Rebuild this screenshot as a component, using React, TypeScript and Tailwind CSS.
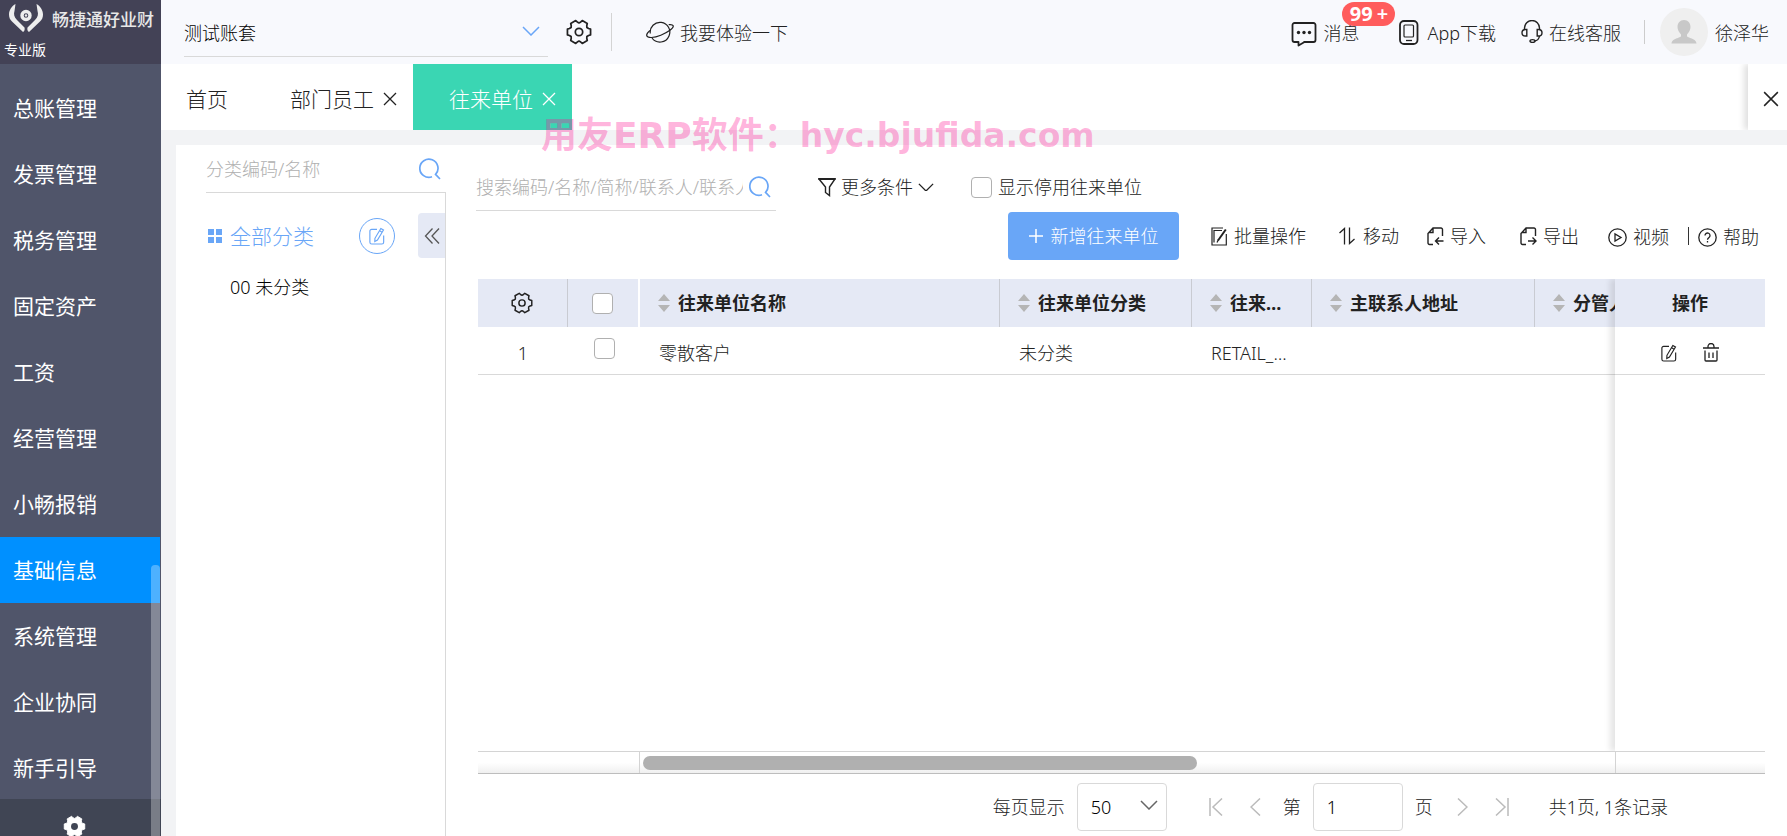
import React, { useState } from "react";

interface IconProps {
  className?: string;
}

const menuItems = [
  "总账管理",
  "发票管理",
  "税务管理",
  "固定资产",
  "工资",
  "经营管理",
  "小畅报销",
  "基础信息",
  "系统管理",
  "企业协同",
  "新手引导",
];

const columns = [
  { title: "往来单位名称", value: "零散客户" },
  { title: "往来单位分类", value: "未分类" },
  { title: "往来单位性质", value: "RETAIL_CUSTOMER" },
  { title: "主联系人地址", value: "" },
  { title: "分管人员", value: "" },
];

// six-toothed cog outline
const cogPath = (() => {
  const pt = (deg: number, r: number) => {
    const a = (deg * Math.PI) / 180;
    return `${(12 + r * Math.cos(a)).toFixed(2)} ${(12 + r * Math.sin(a)).toFixed(2)}`;
  };
  const pts: string[] = [];
  for (let k = 0; k < 6; k++) {
    const a = k * 60;
    pts.push(pt(a - 20, 9.4), pt(a - 14, 11), pt(a + 14, 11), pt(a + 20, 9.4), pt(a + 30, 8.4));
  }
  return `M${pts.join("L")}Z`;
})();

const CogIcon = ({ className }: IconProps) => (
  <svg className={className} viewBox="0 0 24 24" fill="none" stroke="currentColor" strokeWidth="1.6" strokeLinejoin="round">
    <path d={cogPath} />
    <circle cx="12" cy="12" r="3.4" />
  </svg>
);

const CogSolidIcon = ({ className }: IconProps) => (
  <svg className={className} viewBox="0 0 24 24" fill="currentColor" stroke="currentColor" strokeWidth="1" strokeLinejoin="round">
    <path d={cogPath} />
    <circle cx="12" cy="12" r="3.6" fill="#404554" stroke="none" />
  </svg>
);

const SearchIcon = ({ className }: IconProps) => (
  <svg className={className} viewBox="0 0 22 22" fill="none" stroke="currentColor" strokeWidth="1.7">
    <path d="M13 18.8A9.1 9.1 0 1 1 16.6 16.4L21 21" />
  </svg>
);

const ChevronIcon = ({ className }: IconProps) => (
  <svg className={className} viewBox="0 0 18 10" fill="none" stroke="currentColor" strokeWidth="1.5">
    <path d="M1 1l8 8 8-8" />
  </svg>
);

const CloseIcon = ({ className }: IconProps) => (
  <svg className={className} viewBox="0 0 14 14" fill="none" stroke="currentColor" strokeWidth="1.3">
    <path d="M1 1l12 12M13 1L1 13" />
  </svg>
);

const LogoIcon = () => (
  <svg className="w-9 h-[30px] shrink-0" viewBox="0 0 36 30" fill="#eeeeee">
    <path d="M7.500 1C4 3 1 7 1 11.500c0 3 1 5 3 7L15 29c1.500-1 2-2.500 1.500-4.500L9 17c-3-3-3.500-6-2.500-9z" />
    <path d="M28.500 1C32 3 35 7 35 11.500c0 3-1 5-3 7L21 29c-1.500-1-2-2.500-1.500-4.500L27 17c3-3 3.500-6 2.500-9z" />
    <circle cx="18" cy="12.500" r="4" fill="none" stroke="#eeeeee" strokeWidth="3.400" />
    <circle cx="18" cy="12.500" r="1.200" />
  </svg>
);

const PlanetIcon = () => (
  <svg className="w-7 h-[22px]" viewBox="0 0 28 22" fill="none" stroke="currentColor" strokeWidth="1.200">
    <path d="M4.300 12.500A9.800 9.800 0 1 1 23 15a9.800 9.800 0 0 1-17 2" />
    <path d="M4 9.500C1.500 11.500.3 13.500.8 14.800c1 2.500 7 2.200 14-.6S28 7 27.200 4.800c-.4-1-2-1.400-4.500-1.100" />
  </svg>
);

const MessageIcon = () => (
  <svg className="w-[26px] h-[25px]" viewBox="0 0 26 25" fill="none" stroke="currentColor" strokeWidth="1.800">
    <path d="M12.500 20H22.500a2 2 0 0 0 2-2V3a2 2 0 0 0-2-2H3.500a2 2 0 0 0-2 2v15a2 2 0 0 0 2 2H7.500v3.500L13.500 20" strokeLinejoin="round" />
    <g fill="currentColor" stroke="none">
      <circle cx="7.500" cy="10.500" r="1.700" />
      <circle cx="13" cy="10.500" r="1.700" />
      <circle cx="18.500" cy="10.500" r="1.700" />
    </g>
  </svg>
);

const PhoneIcon = () => (
  <svg className="w-5 h-[25px]" viewBox="0 0 20 25" fill="none" stroke="currentColor">
    <rect x="1" y="1" width="17.500" height="23" rx="4" strokeWidth="1.800" />
    <rect x="5" y="5" width="9.500" height="12" rx="1" strokeWidth="1.200" />
    <path d="M7 20.500h6" strokeWidth="1.300" />
  </svg>
);

const HeadsetIcon = () => (
  <svg className="w-[22px] h-6" viewBox="0 0 22 24" fill="none" stroke="currentColor" strokeWidth="1.400">
    <path d="M3.500 9.500V8a7.500 7.500 0 0 1 15 0v1.500" />
    <path d="M5.800 9.500v6.500H4.500C2.500 16 1 14.700 1 12.700s1.500-3.200 3.500-3.200zM16.200 9.500v6.500h1.300c2 0 3.500-1.300 3.500-3.300s-1.500-3.200-3.500-3.200z" />
    <path d="M18.500 16c-.5 3-2.500 4.800-5 5" />
    <ellipse cx="11.500" cy="21" rx="2.500" ry="1.400" />
  </svg>
);

const EditIcon = ({ className }: IconProps) => (
  <svg className={className} viewBox="0 0 18 20" fill="none" stroke="currentColor" strokeWidth="1.300">
    <path d="M9 2.500H3a2 2 0 0 0-2 2V17a2 2 0 0 0 2 2h11.500a2 2 0 0 0 2-2V9.500" />
    <path d="M13.300 1.500l3 1.800-6.800 11.200-3 1.700.2-3.600zM12 4l2.800 1.700" />
  </svg>
);

const TrashIcon = () => (
  <svg className="w-4 h-[19px]" viewBox="0 0 16 19" fill="none" stroke="currentColor" strokeWidth="1.300">
    <path d="M0 5h16M5 5V3.500a3 3 0 0 1 6 0V5M2 7.500V17a1 1 0 0 0 1 1h10a1 1 0 0 0 1-1V7.500M6 9.500v5.500M10 9.500v5.500" />
  </svg>
);

const FilterIcon = () => (
  <svg className="w-[18px] h-5" viewBox="0 0 18 20" fill="none" stroke="currentColor" strokeWidth="1.400">
    <path d="M1 2h16l-5.500 8V18.500l-4-3V10z" />
    <path d="M.5 2h17" strokeWidth="2" />
  </svg>
);

const BatchIcon = () => (
  <svg className="w-4 h-[19px]" viewBox="0 0 16 19" fill="none" stroke="currentColor" strokeWidth="1.200">
    <path d="M3 15.500V3.500H11M12 1H1v17h14.300V7" />
    <path d="M14.800 2.500L7 13.500" strokeWidth="2" />
    <path d="M7.500 12.500L6 15.500" />
  </svg>
);

const MoveIcon = () => (
  <svg className="w-[18px] h-[18px]" viewBox="0 0 18 18" fill="none" stroke="currentColor" strokeWidth="1.300">
    <path d="M6.500 17.500V1.500L1.500 6M11.500 .5v16L16.500 12" />
  </svg>
);

const FileIcon = ({ out }: { out?: boolean }) => (
  <svg className="w-[17px] h-[19px]" viewBox="0 0 17 19" fill="none" stroke="currentColor" strokeWidth="1.400">
    <path d="M6 17.500H2.500A1.500 1.500 0 0 1 1 16V6.500L6 1h8a1.500 1.500 0 0 1 1.500 1.500V9M6 1v4.500H1.500" />
    {out ? (
      <path d="M8 14h8M12.500 10.500L16 14l-3.500 3.500" />
    ) : (
      <path d="M16.500 14h-8M12 10.500L8.500 14l3.500 3.500" />
    )}
  </svg>
);

const PlayIcon = () => (
  <svg className="w-[19px] h-[19px]" viewBox="0 0 19 19" fill="none" stroke="currentColor" strokeWidth="1.300">
    <circle cx="9.500" cy="9.500" r="8.700" />
    <path d="M7 6v7l6-3.500z" />
  </svg>
);

const HelpIcon = () => (
  <svg className="w-[19px] h-[19px]" viewBox="0 0 19 19" fill="none" stroke="currentColor" strokeWidth="1.300">
    <circle cx="9.500" cy="9.500" r="8.700" />
    <path d="M7 7.500a2.500 2.500 0 1 1 4 2c-1 .8-1.500 1.200-1.500 2.200M9.500 13v1.500" />
  </svg>
);

const SortIcon = () => (
  <svg className="w-3 h-5 shrink-0" viewBox="0 0 12 20" fill="#b5b5b5">
    <path d="M6 1l6 7H0zM6 19l6-7H0z" />
  </svg>
);

const Checkbox = ({ label, id }: { label: string; id?: string }) => (
  <input
    type="checkbox"
    id={id}
    aria-label={label}
    className="block size-[21px] shrink-0 appearance-none rounded border border-[#b0b0b0] bg-white checked:bg-[#69a6f7]"
  />
);

function Sidebar() {
  const [active, setActive] = useState("基础信息");

  return (
    <aside className="relative flex w-[161px] shrink-0 flex-col bg-[#50556a] font-normal text-white">
      <div className="h-16 shrink-0 bg-[#434256]">
        <div className="flex items-center gap-2 pt-[3px] pl-2">
          <LogoIcon />
          <span className="pt-1 text-[17px] leading-6 font-medium whitespace-nowrap text-[#e8e8e8]">
            畅捷通好业财
          </span>
        </div>
        <div className="pt-[5px] pl-1 text-sm leading-6">专业版</div>
      </div>
      <nav className="min-h-0 flex-1 overflow-hidden pt-[11px]">
        {menuItems.map((item) => (
          <button
            key={item}
            onClick={() => setActive(item)}
            className={`block h-[66px] w-40 pl-[13px] text-left text-[21px] ${
              item === active ? "bg-[#0090ff]" : ""
            }`}
          >
            {item}
          </button>
        ))}
      </nav>
      <button aria-label="设置" className="flex h-[37px] shrink-0 justify-center bg-[#404554] pt-4 pr-3">
        <CogSolidIcon className="size-[23px]" />
      </button>
      <div className="absolute right-px bottom-0 h-[271px] w-[9px] rounded-t bg-white/30" />
    </aside>
  );
}

function TopBar() {
  return (
    <header className="flex h-16 shrink-0 items-center bg-[#f8f9fd] pr-[18px] pl-[23px] whitespace-nowrap">
      <div className="mb-[7px] grid h-12 w-[364px] items-center self-end border-b border-[#d9d9d9]">
        <select aria-label="账套" className="col-start-1 row-start-1 h-10 appearance-none bg-transparent text-black">
          <option>测试账套</option>
        </select>
        <ChevronIcon className="pointer-events-none col-start-1 row-start-1 mr-2 mb-1 w-[18px] justify-self-end text-[#69a6f7]" />
      </div>
      <button aria-label="设置" className="ml-[18px]">
        <CogIcon className="size-[26px]" />
      </button>
      <div className="ml-[19px] h-[38px] w-px bg-[#d4d4d4]" />
      <button className="ml-[34px] flex items-center gap-[6px]">
        <PlanetIcon />
        <span className="pt-[2px]">我要体验一下</span>
      </button>
      <div className="ml-auto flex items-center">
        <button className="relative flex items-center gap-[6px]">
          <span className="pt-1">
            <MessageIcon />
          </span>
          <span className="pt-[2px]">消息</span>
          <span className="absolute -top-4 left-[51px] flex h-6 w-[53px] items-center justify-center rounded-full bg-[#ff5c5c] text-xl font-bold text-white">
            99
            <span className="pl-1 font-semibold">+</span>
          </span>
        </button>
        <button className="ml-10 flex items-center gap-2">
          <PhoneIcon />
          <span className="pt-[2px]">App下载</span>
        </button>
        <button className="ml-[25px] flex items-center gap-[6px]">
          <HeadsetIcon />
          <span className="pt-[2px]">在线客服</span>
        </button>
        <div className="ml-[23px] h-6 w-px bg-[#cccccc]" />
        <button className="ml-[15px] flex items-center gap-[7px]">
          <svg className="size-12" viewBox="0 0 48 48">
            <circle cx="24" cy="24" r="24" fill="#efefef" />
            <path
              d="M24 12c4 0 6.500 3 6.500 7 0 3-1.500 5-3.500 7.500v2c4 2 9.500 3 9.500 7H11.500c0-4 5.500-5 9.500-7v-2c-2-2.500-3.500-4.500-3.500-7.500 0-4 2.500-7 6.500-7z"
              fill="#c8c8c8"
            />
          </svg>
          <span className="pt-[2px]">徐泽华</span>
        </button>
      </div>
    </header>
  );
}

function TabBar() {
  return (
    <div className="flex h-[66px] shrink-0 overflow-hidden bg-white pt-0 text-[21px] whitespace-nowrap">
      <button className="w-[110px] pt-1 pr-[18px]">首页</button>
      <div className="flex w-[142px] items-center justify-end gap-[9px] pt-1 pr-4">
        <button>部门员工</button>
        <button aria-label="关闭部门员工">
          <CloseIcon className="size-[14px]" />
        </button>
      </div>
      <div className="flex w-[159px] items-center justify-end gap-[9px] bg-[#3ad6b3] pt-1 pr-4 text-white">
        <button>往来单位</button>
        <button aria-label="关闭往来单位">
          <CloseIcon className="size-[14px]" />
        </button>
      </div>
      <button
        aria-label="关闭全部"
        className="ml-auto flex w-[39px] items-center justify-center pt-1 pl-[6px] shadow-[-4px_0_6px_rgba(0,0,0,0.12)]"
      >
        <CloseIcon className="size-4" />
      </button>
    </div>
  );
}

function CategoryPanel() {
  return (
    <section className="flex w-[270px] shrink-0 flex-col pl-[30px]">
      <div className="flex h-12 shrink-0 items-center border-b border-[#d9d9d9] pr-[5px]">
        <input
          aria-label="分类编码/名称"
          placeholder="分类编码/名称"
          className="min-w-0 flex-1 outline-none placeholder:text-[#b0b0b0]"
        />
        <button aria-label="搜索分类" className="text-[#69a6f7]">
          <SearchIcon className="size-[22px]" />
        </button>
      </div>
      <div className="flex-1 border-r border-[#d9d9d9] pt-5">
        <div className="flex h-[45px] items-center text-[21px] text-[#69a6f7]">
          <svg className="mx-[2px] size-[14px]" viewBox="0 0 14 14" fill="currentColor">
            <path d="M0 0h6v6H0zM8 0h6v6H8zM0 8h6v6H0zM8 8h6v6H8z" />
          </svg>
          <button className="ml-[6px]">全部分类</button>
          <button
            aria-label="编辑分类"
            className="ml-auto flex size-9 items-center justify-center rounded-full border border-[#69a6f7]"
          >
            <EditIcon className="h-[18px] w-4" />
          </button>
          <button
            aria-label="收起"
            className="ml-[23px] flex h-[45px] w-[27px] items-center justify-center rounded-l bg-[#e5e9f5] text-[#555555]"
          >
            <svg className="size-4" viewBox="0 0 16 16" fill="none" stroke="currentColor" strokeWidth="1.300">
              <path d="M8.500 .5L1.500 8l7 7.500M15 .5L8 8l7 7.500" />
            </svg>
          </button>
        </div>
        <button className="mt-[17px] ml-6 block text-black">00 未分类</button>
      </div>
    </section>
  );
}

function Toolbar() {
  return (
    <>
      <div className="flex h-[66px] items-end">
        <div className="flex h-12 w-[300px] items-center border-b border-[#d9d9d9] pr-[5px]">
          <input
            aria-label="搜索往来单位"
            placeholder="搜索编码/名称/简称/联系人/联系人手机"
            className="min-w-0 flex-1 outline-none placeholder:text-[#b0b0b0]"
          />
          <button aria-label="搜索" className="ml-[6px] text-[#69a6f7]">
            <SearchIcon className="size-[22px]" />
          </button>
        </div>
        <button className="ml-[42px] flex h-12 items-center gap-[5px]">
          <FilterIcon />
          更多条件
          <ChevronIcon className="w-4" />
        </button>
        <div className="ml-[37px] flex h-12 items-center gap-[6px]">
          <Checkbox id="show-disabled" label="显示停用往来单位" />
          <label htmlFor="show-disabled">显示停用往来单位</label>
        </div>
      </div>
      <div className="flex items-center justify-end pt-px pr-[6px]">
        <button className="flex h-12 w-[171px] items-center justify-center gap-2 rounded bg-[#69a6f7] text-white">
          <svg className="size-[14px]" viewBox="0 0 14 14" stroke="currentColor" strokeWidth="1.500">
            <path d="M7 0v14M0 7h14" />
          </svg>
          新增往来单位
        </button>
        <button className="ml-8 flex items-center gap-[7px]">
          <BatchIcon />
          批量操作
        </button>
        <button className="ml-8 flex items-center gap-[7px]">
          <MoveIcon />
          移动
        </button>
        <button className="ml-7 flex items-center gap-[6px]">
          <FileIcon />
          导入
        </button>
        <button className="ml-[34px] flex items-center gap-[6px]">
          <FileIcon out />
          导出
        </button>
        <button className="ml-[29px] flex items-center gap-[6px] pt-[2px]">
          <PlayIcon />
          视频
        </button>
        <div className="ml-[19px] h-[18px] w-px bg-[#333333]" />
        <button className="ml-[9px] flex items-center gap-[6px] pt-[2px]">
          <HelpIcon />
          帮助
        </button>
      </div>
    </>
  );
}

function PartnerTable() {
  return (
    <div className="mt-[19px] ml-[2px] flex min-h-0 flex-1 flex-col">
      <div className="flex min-h-0 flex-1 border-b border-[#d4d4d4]">
        <div className="min-w-0 flex-1 overflow-hidden">
          <table className="w-[1260px] table-fixed border-separate border-spacing-0">
            <colgroup>
              <col className="w-[90px]" />
              <col className="w-[72px]" />
              <col className="w-[360px]" />
              <col className="w-[192px]" />
              <col className="w-[120px]" />
              <col className="w-[223px]" />
              <col />
            </colgroup>
            <thead>
              <tr className="h-12 bg-[#e5e9f5]">
                <th className="border-r border-[#c9cbd2] pr-[2px]">
                  <button aria-label="列设置" className="mx-auto block">
                    <CogIcon className="size-[22px]" />
                  </button>
                </th>
                <th className="border-r-2 border-white pl-6">
                  <Checkbox label="全选" />
                </th>
                {columns.map((col) => (
                  <th key={col.title} className="border-r border-[#c9cbd2] pr-[22px] pl-[18px] text-left font-bold">
                    <div className="flex items-center gap-2">
                      <SortIcon />
                      <span className="truncate">{col.title}</span>
                    </div>
                  </th>
                ))}
              </tr>
            </thead>
            <tbody>
              <tr className="h-12">
                <td className="border-b border-[#d9d9d9] pt-1 text-center">1</td>
                <td className="border-b border-[#d9d9d9] pb-1 pl-[26px]">
                  <Checkbox label="选择零散客户" />
                </td>
                {columns.map((col) => (
                  <td key={col.title} className="truncate border-b border-[#d9d9d9] pt-1 pr-4 pl-[19px]">
                    {col.value}
                  </td>
                ))}
              </tr>
            </tbody>
          </table>
        </div>
        <div className="z-10 w-[150px] shrink-0 bg-white shadow-[-5px_0_6px_rgba(0,0,0,0.1)] [clip-path:inset(0_0_0_-12px)]">
          <table className="w-full border-separate border-spacing-0">
            <thead>
              <tr className="h-12 bg-[#e5e9f5]">
                <th className="font-bold">操作</th>
              </tr>
            </thead>
            <tbody>
              <tr className="h-12">
                <td className="border-b border-[#d9d9d9] pt-1">
                  <div className="flex items-center justify-center gap-[26px]">
                    <button aria-label="编辑">
                      <EditIcon className="h-[18px] w-4" />
                    </button>
                    <button aria-label="删除">
                      <TrashIcon />
                    </button>
                  </div>
                </td>
              </tr>
            </tbody>
          </table>
        </div>
      </div>
      <div className="flex h-[22px] shrink-0 border-b border-[#bdbdbd] bg-linear-to-t from-[#f0f0f0] to-white to-50%">
        <div className="w-[162px] border-r border-[#d4d4d4]" />
        <div className="flex flex-1 items-center border-r border-[#d4d4d4] pl-[3px]">
          <div className="h-[14px] w-[57%] rounded-full bg-[#b0b0b0]" />
        </div>
        <div className="w-[149px]" />
      </div>
    </div>
  );
}

function Pagination() {
  return (
    <footer className="flex h-[62px] shrink-0 items-center justify-end pt-[3px] pr-[97px] whitespace-nowrap">
      <label htmlFor="page-size">每页显示</label>
      <div className="ml-3 grid w-[90px] items-center">
        <select
          id="page-size"
          className="col-start-1 row-start-1 h-12 w-full appearance-none rounded border border-[#d9d9d9] bg-white pl-[13px] text-black"
        >
          <option>50</option>
        </select>
        <ChevronIcon className="pointer-events-none col-start-1 row-start-1 mr-[9px] mb-1 w-[18px] justify-self-end text-[#666666]" />
      </div>
      <button aria-label="首页" className="ml-[42px] text-[#bbbbbb]">
        <svg className="h-[18px] w-[14px]" viewBox="0 0 14 18" fill="none" stroke="currentColor" strokeWidth="1.500">
          <path d="M1 0v18M13 .5L4 9l9 8.500" />
        </svg>
      </button>
      <button aria-label="上一页" className="ml-[27px] text-[#bbbbbb]">
        <svg className="h-[18px] w-[11px]" viewBox="0 0 11 18" fill="none" stroke="currentColor" strokeWidth="1.500">
          <path d="M10 .5L1 9l9 8.500" />
        </svg>
      </button>
      <label htmlFor="page-no" className="ml-[22px]">
        第
      </label>
      <input
        id="page-no"
        defaultValue="1"
        className="mx-3 h-12 w-[90px] rounded border border-[#d9d9d9] pl-[13px] text-black"
      />
      <span>页</span>
      <button aria-label="下一页" className="ml-6 text-[#bbbbbb]">
        <svg className="h-[18px] w-[11px]" viewBox="0 0 11 18" fill="none" stroke="currentColor" strokeWidth="1.500">
          <path d="M1 .5L10 9l-9 8.500" />
        </svg>
      </button>
      <button aria-label="末页" className="ml-[27px] text-[#bbbbbb]">
        <svg className="h-[18px] w-[14px]" viewBox="0 0 14 18" fill="none" stroke="currentColor" strokeWidth="1.500">
          <path d="M13 0v18M1 .5L10 9l-9 8.500" />
        </svg>
      </button>
      <span className="ml-10">共1页, 1条记录</span>
    </footer>
  );
}

function App() {
  return (
    <div className="relative flex h-screen overflow-hidden bg-[#f2f3f5] font-['Noto_Sans','Noto_Sans_CJK_SC',sans-serif] text-lg leading-6 font-light text-[#222222]">
      <Sidebar />
      <div className="flex min-w-0 flex-1 flex-col">
        <TopBar />
        <TabBar />
        <main className="mt-[15px] ml-[15px] flex min-h-0 flex-1 bg-white">
          <CategoryPanel />
          <section className="flex min-w-0 flex-1 flex-col pr-[22px] pl-[30px]">
            <Toolbar />
            <PartnerTable />
            <Pagination />
          </section>
        </main>
      </div>
      <div className="pointer-events-none absolute top-[114px] left-[541px] flex items-center font-['DejaVu_Sans','Noto_Sans_CJK_SC',sans-serif] text-[36px] leading-[44px] font-bold whitespace-nowrap text-[#ff1493]/33">
        <span>用友ERP软件：</span>
        <span className="text-[33px]">hyc.bjufida.com</span>
      </div>
    </div>
  );
}

export default App;
